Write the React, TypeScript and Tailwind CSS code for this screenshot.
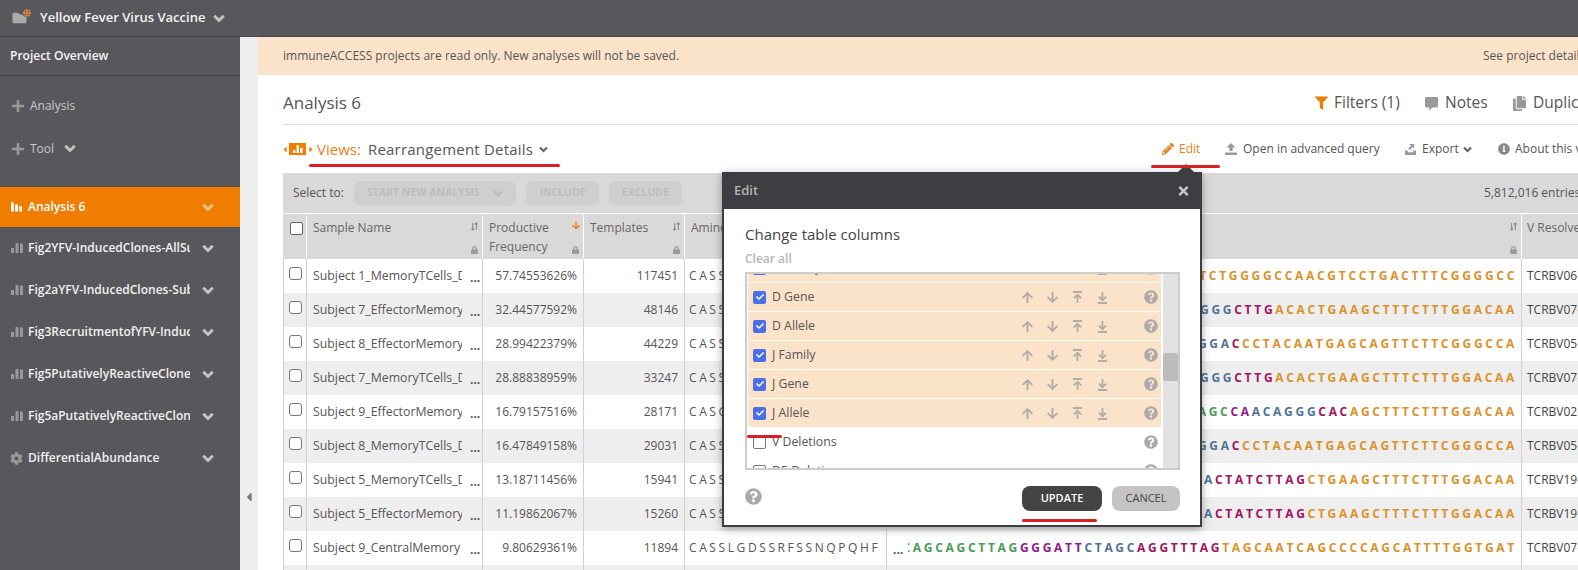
import React from "react";
import {
  FaPlus, FaFilter, FaCommentAlt, FaCopy, FaPencilAlt, FaInfoCircle,
  FaQuestionCircle, FaTimes, FaCog, FaArrowUp, FaArrowDown, FaLock, FaCheck, FaFolder, FaGlobe,
  FaCaretLeft, FaCaretRight,
} from "react-icons/fa";

const Chev = ({ className = "" }: { className?: string }) => (
  <svg viewBox="0 0 12 9" className={className} fill="none" stroke="currentColor" strokeWidth="3">
    <path d="M1.3 1.8 6 6.5l4.7-4.7" />
  </svg>
);
const Bars = ({ className = "" }: { className?: string }) => (
  <svg viewBox="0 0 12 10" className={className} fill="currentColor">
    <rect x="0" y="0" width="3" height="10" />
    <rect x="4.5" y="2" width="3" height="8" />
    <rect x="9" y="4" width="3" height="6" />
  </svg>
);
const GreyBars = () => (
  <svg viewBox="0 0 12 10" className="w-[12px] h-[10px] text-[#999]" fill="currentColor">
    <rect x="0" y="5" width="3" height="5" />
    <rect x="4.5" y="0" width="3" height="10" />
    <rect x="9" y="0.5" width="3" height="9.5" />
  </svg>
);
const SortIcon = ({ active = false }: { active?: boolean }) =>
  active ? (
    <FaArrowDown className="w-[8px] h-[9px] text-[#ee7d11] mt-[3px]" />
  ) : (
    <svg viewBox="0 0 10 10" className="w-[9px] h-[9px] text-[#888] mt-[3px]" stroke="currentColor" strokeWidth="1.2" fill="none">
      <path d="M3 1v8M1.5 7.5 3 9l1.5-1.5M7 9V1M5.5 2.5 7 1l1.5 1.5" />
    </svg>
  );
const ToTop = () => (
  <svg viewBox="0 0 12 14" className="w-[11px] h-[13px] text-[#b0aca6]" fill="none" stroke="currentColor" strokeWidth="2">
    <path d="M1 1h10M6 13V4M2 8l4-4 4 4" />
  </svg>
);
const ToBottom = () => (
  <svg viewBox="0 0 12 14" className="w-[11px] h-[13px] text-[#b0aca6]" fill="none" stroke="currentColor" strokeWidth="2">
    <path d="M1 13h10M6 1v9M2 6l4 4 4-4" />
  </svg>
);
const UploadBar = () => (
  <svg viewBox="0 0 12 12" className="w-[12px] h-[12px] text-[#999]" fill="currentColor">
    <path d="M6 0 10.5 4.5H7.6V8H4.4V4.5H1.5Z" />
    <rect x="0" y="9.5" width="12" height="2.5" />
  </svg>
);
const ExportIcon = () => (
  <svg viewBox="0 0 14 13" className="w-[13px] h-[12px] text-[#999]" fill="currentColor">
    <path d="M5 1h6v5L9.2 4.3 6 7.5 4.5 6l3.2-3.2Z" />
    <path d="M1 8h3v2h6V8h3v5H1Z" />
  </svg>
);

const C = {
  g: "text-[#4c9a5c]",
  p: "text-[#8e1a8e]",
  b: "text-[#4f7397]",
  r: "text-[#a3125f]",
  a: "text-[#d9922c]",
};
type Seg = [string, keyof typeof C];

const seqA: Seg[] = [["GCAGTAGCAGCTAC", "g"], ["GGGC", "b"], ["GGG", "b"], ["CTTG", "r"], ["ACACTGAAGCTTTCTTTGGACAA", "a"]];
const seqB: Seg[] = [["AGCAGCGTAGCTAG", "g"], ["CAGGGA", "b"], ["GGA", "b"], ["C", "r"], ["CCTACAATGAGCAGTTCTTCGGGCCA", "a"]];
const seqC: Seg[] = [["GCAGTATTGGAAC", "g"], ["TGGCA", "b"], ["CTATCTTAG", "r"], ["CTGAAGCTTTCTTTGGACAA", "a"]];

const rows: { n: string; f: string; t: string; aa: string; seq: Seg[]; v: string }[] = [
  { n: "Subject 1_MemoryTCells_Day0", f: "57.74553626%", t: "117451", aa: "CASSLGANVLTFGA", seq: [["AGCTACTGAGTAGCAGC", "g"], ["TCTGGGGCCAACGTCCTGACTTTCGGGGCC", "a"]], v: "TCRBV06-01" },
  { n: "Subject 7_EffectorMemoryTCells", f: "32.44577592%", t: "48146", aa: "CASSLGLTLKLSLDK", seq: seqA, v: "TCRBV07-09" },
  { n: "Subject 8_EffectorMemoryTCells", f: "28.99422379%", t: "44229", aa: "CASSLGTYNEQFFGP", seq: seqB, v: "TCRBV05-01" },
  { n: "Subject 7_MemoryTCells_Day0", f: "28.88838959%", t: "33247", aa: "CASSLGLTLKLSLDK", seq: seqA, v: "TCRBV07-09" },
  { n: "Subject 9_EffectorMemoryTCells", f: "16.79157516%", t: "28171", aa: "CASGQQGTALSFGQ", seq: [["GCAGTACCTTGCACCAGC", "g"], ["AGC", "g"], ["CA", "p"], ["ACAGGG", "b"], ["CAC", "r"], ["AGCTTTCTTTGGACAA", "a"]], v: "TCRBV02-01" },
  { n: "Subject 8_MemoryTCells_Day0", f: "16.47849158%", t: "29031", aa: "CASSLGTYNEQFFGP", seq: seqB, v: "TCRBV05-01" },
  { n: "Subject 5_MemoryTCells_Day0", f: "13.18711456%", t: "15941", aa: "CASSLGYLAEAFFGQ", seq: seqC, v: "TCRBV19-01" },
  { n: "Subject 5_EffectorMemoryTCells", f: "11.19862067%", t: "15260", aa: "CASSLGYLAEAFFGQ", seq: seqC, v: "TCRBV19-01" },
  { n: "Subject 9_CentralMemory", f: "9.80629361%", t: "11894", aa: "CASSLGDSSRFSSNQPQHF", seq: [["GCTGGCCAGCTGCTCTGTGTACTTCTGTGCCAGC", "g"], ["AGCAGCTTAG", "g"], ["GGGATT", "p"], ["CTAGC", "b"], ["AGGTTTAG", "r"], ["TAGCAATCAGCCCCAGCATTTTGGTGAT", "a"]], v: "TCRBV07-02" },
];

const grid = "grid grid-cols-[24px_176px_101px_101px_202px_635px_200px]";
const sep = "border-r border-[#d2d2d2]";

const NavItem = ({ label, gear = false }: { label: string; gear?: boolean }) => (
  <div className="h-[42px] flex items-center pl-[11px] pr-[26px]">
    <div className="w-[17px] flex items-center">
      {gear ? <FaCog className="w-[13px] h-[13px] text-[#999] -ml-px" /> : <GreyBars />}
    </div>
    <span className="w-[162px] overflow-hidden whitespace-nowrap text-[12px] font-semibold text-[#f1f1f1]">{label}</span>
    <Chev className="ml-auto w-[12px] h-[9px] text-[#c4c4c4]" />
  </div>
);

const ColRow = ({ label, checked = true, arrows = true }: { label: string; checked?: boolean; arrows?: boolean }) => (
  <div className={`h-[28px] mb-px flex items-center pl-[5px] ${checked ? "bg-[#fbe3ca]" : "bg-white"}`}>
    {checked ? (
      <span className="w-[13px] h-[13px] rounded-[2px] bg-[#4a6ee8] flex items-center justify-center">
        <FaCheck className="w-[8px] h-[8px] text-white" />
      </span>
    ) : (
      <span className="w-[13px] h-[13px] rounded-[2px] border border-[#777] bg-white" />
    )}
    <span className="ml-[6px] w-[250px] text-[12.3px] text-[#555]">{label}</span>
    <div className={`flex items-center gap-[14px] w-[94px] ${arrows ? "" : "invisible"}`}>
      <FaArrowUp className="w-[11px] h-[13px] text-[#b0aca6]" />
      <FaArrowDown className="w-[11px] h-[13px] text-[#b0aca6]" />
      <ToTop />
      <ToBottom />
    </div>
    <FaQuestionCircle className="ml-[28px] w-[14px] h-[14px] text-[#aaa]" />
  </div>
);

export default function App() {
  return (
    <div className="relative w-[1578px] h-[570px] overflow-hidden bg-white font-['Open_Sans',sans-serif] text-[#555]">
      {/* top bar */}
      <div className="h-[37px] bg-[#58585c] border-b border-[#444448] flex items-center pl-[11px]">
        <div className="relative w-[18px] h-[14px] mr-[11px]">
          <FaFolder className="w-[17px] h-[14px] text-[#aaa]" />
          <span className="absolute -top-[3px] right-[-2px] w-[9px] h-[9px] rounded-full bg-[#58585c] flex items-center justify-center">
            <FaGlobe className="w-[8px] h-[8px] text-[#e08a3c]" />
          </span>
        </div>
        <span className="text-[13px] font-semibold text-[#f4f4f4]">Yellow Fever Virus Vaccine</span>
        <Chev className="ml-[8px] w-[12px] h-[9px] text-[#c4c4c4]" />
      </div>

      <div className="flex h-[533px]">
        {/* sidebar */}
        <aside className="w-[240px] shrink-0 bg-[#58585c]">
          <div className="h-[39px] border-b border-[#444448] flex items-center pl-[10px] text-[12px] font-semibold text-[#f4f4f4]">
            Project Overview
          </div>
          <div className="h-[43px] mt-[8px] flex items-center pl-[11px] text-[12px] text-[#c9c9c9]">
            <FaPlus className="w-[14px] h-[14px] text-[#999] mr-[5px]" />
            Analysis
          </div>
          <div className="h-[43px] flex items-center pl-[11px] text-[12px] text-[#c9c9c9]">
            <FaPlus className="w-[14px] h-[14px] text-[#999] mr-[5px]" />
            Tool
            <Chev className="ml-[10px] w-[12px] h-[9px] text-[#c4c4c4]" />
          </div>
          <div className="h-[40px] mt-[17px] bg-[#f07c00] flex items-center pl-[11px] pr-[26px]">
            <div className="w-[17px] flex items-center">
              <Bars className="w-[11px] h-[10px] text-white" />
            </div>
            <span className="text-[12px] font-semibold text-white">Analysis 6</span>
            <Chev className="ml-auto w-[12px] h-[9px] text-[#f6c48a]" />
          </div>
          <NavItem label="Fig2YFV-InducedClones-AllSubjects" />
          <NavItem label="Fig2aYFV-InducedClones-Subjects" />
          <NavItem label="Fig3RecruitmentofYFV-InducedClones" />
          <NavItem label="Fig5PutativelyReactiveClones" />
          <NavItem label="Fig5aPutativelyReactiveClones" />
          <NavItem label="DifferentialAbundance" gear />
        </aside>

        {/* collapse strip */}
        <div className="w-[18px] shrink-0 bg-[#eeeeee] flex items-end pb-[66px] pl-[6px]">
          <FaCaretLeft className="w-[6px] h-[14px] text-[#777]" />
        </div>

        {/* main */}
        <main className="flex-1 min-w-0 overflow-hidden">
          <div className="h-[38px] bg-[#fbe3ca] flex items-center pl-[25px] text-[12px] text-[#555] whitespace-nowrap">
            <span className="w-[1200px] shrink-0">immuneACCESS projects are read only. New analyses will not be saved.</span>
            <span>See project details</span>
          </div>
          <div className="pl-[25px]">
            <div className="h-[50px] pt-[7px] border-b border-[#dcdcdc] flex items-center whitespace-nowrap w-[1400px]">
              <span className="w-[1032px] text-[17px] text-[#555]">Analysis 6</span>
              <FaFilter className="w-[13px] h-[14px] text-[#f07c00] mr-[6px]" />
              <span className="text-[15.5px] w-[90px]">Filters (1)</span>
              <FaCommentAlt className="w-[15px] h-[13px] text-[#999] mr-[6px]" />
              <span className="text-[15.5px] w-[67px]">Notes</span>
              <FaCopy className="w-[15px] h-[15px] text-[#999] mr-[6px]" />
              <span className="text-[15.5px]">Duplicate</span>
            </div>
            <div className="h-[48px] flex items-center whitespace-nowrap w-[1400px]">
              <FaCaretLeft className="w-[4px] h-[9px] text-[#f07c00] mr-[2px]" />
              <span className="w-[17px] h-[12px] bg-[#f07c00] flex items-center justify-center">
                <svg viewBox="0 0 10 8" className="w-[10px] h-[8px] text-white" fill="currentColor">
                  <rect x="0" y="5" width="2.4" height="3" />
                  <rect x="3.6" y="0" width="2.4" height="8" />
                  <rect x="7.2" y="3" width="2.4" height="5" />
                </svg>
              </span>
              <FaCaretRight className="w-[4px] h-[9px] text-[#f07c00] ml-[3px] mr-[4px]" />
              <span className="text-[15px] text-[#e8801c] w-[51px]">Views:</span>
              <span className="text-[15px] text-[#555] tracking-[0.2px] w-[171px]">Rearrangement Details</span>
              <Chev className="w-[9px] h-[7px] text-[#666] mr-[614px]" />
              <FaPencilAlt className="w-[12px] h-[12px] text-[#e8801c] mr-[5px]" />
              <span className="text-[12px] text-[#e8801c] w-[46px]">Edit</span>
              <span className="mr-[6px]"><UploadBar /></span>
              <span className="text-[12px] w-[161px]">Open in advanced query</span>
              <span className="mr-[5px]"><ExportIcon /></span>
              <span className="text-[12px] w-[41px]">Export</span>
              <Chev className="w-[9px] h-[7px] text-[#666] mr-[26px]" />
              <FaInfoCircle className="w-[12px] h-[12px] text-[#888] mr-[5px]" />
              <span className="text-[12px]">About this view</span>
            </div>

            {/* table toolbar */}
            <div className="h-[41px] w-[1400px] bg-[#d9d9d9] border-b border-white flex items-center pl-[10px] whitespace-nowrap">
              <span className="text-[12px] w-[61px]">Select to:</span>
              <span className="w-[162px] h-[25px] rounded-[7px] bg-[#cfcfcf] flex items-center pl-[13px] text-[10.5px] font-bold text-[#bcbcbc]">
                START NEW ANALYSIS
                <Chev className="ml-[13px] w-[10px] h-[7px] text-[#bcbcbc]" />
              </span>
              <span className="ml-[10px] w-[73px] h-[25px] rounded-[7px] bg-[#cfcfcf] flex items-center justify-center text-[10.5px] font-bold text-[#bcbcbc]">INCLUDE</span>
              <span className="ml-[10px] w-[73px] h-[25px] rounded-[7px] bg-[#cfcfcf] flex items-center justify-center text-[10.5px] font-bold text-[#bcbcbc]">EXCLUDE</span>
              <span className="ml-[802px] text-[12px]">5,812,016 entries</span>
            </div>

            {/* header */}
            <div className={`${grid} h-[45px] bg-[#d9d9d9] text-[12px] text-[#666]`}>
              <div className="border-r border-white pl-[7px] pt-[8px]">
                <span className="block w-[13px] h-[13px] rounded-[2px] border border-[#666] bg-white" />
              </div>
              <div className="border-r border-white pl-[6px] pr-[3px] pt-[5px] relative flex justify-between">
                <span>Sample Name</span>
                <SortIcon />
                <FaLock className="absolute right-[4px] bottom-[5px] w-[7px] h-[8px] text-[#999]" />
              </div>
              <div className="border-r border-white pl-[6px] pr-[3px] pt-[4px] relative flex justify-between">
                <span className="leading-[19px]">Productive<br />Frequency</span>
                <SortIcon active />
                <FaLock className="absolute right-[4px] bottom-[5px] w-[7px] h-[8px] text-[#999]" />
              </div>
              <div className="border-r border-white pl-[6px] pr-[3px] pt-[5px] relative flex justify-between">
                <span>Templates</span>
                <SortIcon />
                <FaLock className="absolute right-[4px] bottom-[5px] w-[7px] h-[8px] text-[#999]" />
              </div>
              <div className="border-r border-white pl-[6px] pt-[5px]">Amino Acid</div>
              <div className="border-r border-white pr-[3px] pt-[5px] relative flex justify-end">
                <SortIcon />
                <FaLock className="absolute right-[4px] bottom-[5px] w-[7px] h-[8px] text-[#999]" />
              </div>
              <div className="pl-[5px] pt-[5px] whitespace-nowrap">V Resolved</div>
            </div>

            {/* rows */}
            {rows.map((r, i) => (
              <div key={i} className={`${grid} h-[34px] items-stretch text-[12px] text-[#555] whitespace-nowrap ${i % 2 ? "bg-[#eeeeee]" : "bg-white"}`}>
                <div className={`${sep} border-l pl-[5px] pt-[8px]`}>
                  <span className="block w-[13px] h-[13px] rounded-[3px] border border-[#777] bg-white" />
                </div>
                <div className={`${sep} pl-[6px] flex items-center`}>
                  <span className="w-[149px] overflow-hidden text-[12.3px]">{r.n}</span>
                  <span className="ml-[8px] font-bold text-[12px] leading-none pt-[4px]">...</span>
                </div>
                <div className={`${sep} pr-[6px] flex items-center justify-end`}>{r.f}</div>
                <div className={`${sep} pr-[6px] flex items-center justify-end`}>{r.t}</div>
                <div className={`${sep} pl-[4px] flex items-center tracking-[2.6px] overflow-hidden`}>{r.aa}</div>
                <div className={`${sep} flex items-center pl-[6px] overflow-hidden`}>
                  <span className="font-bold leading-none pt-[4px] shrink-0 mr-[5px]">...</span>
                  <div className="flex-1 min-w-0 flex justify-end overflow-hidden pr-[4px] font-bold tracking-[2.7px]">
                    <span className="shrink-0">
                      {r.seq.map((s, j) => (
                        <span key={j} className={C[s[1]]}>{s[0]}</span>
                      ))}
                    </span>
                  </div>
                </div>
                <div className="pl-[5px] flex items-center text-[#444]">{r.v}</div>
              </div>
            ))}
            <div className={`${grid} h-[34px] bg-[#eeeeee]`}>
              <div className={`${sep} border-l`} />
              <div className={sep} />
              <div className={sep} />
              <div className={sep} />
              <div className={sep} />
              <div className={sep} />
              <div />
            </div>
          </div>
        </main>
      </div>

      {/* modal */}
      <div className="absolute left-[722px] top-[172px] w-[480px] h-[355px] border-2 border-t-0 border-[#3d3e42] bg-white shadow-[0_2px_8px_rgba(0,0,0,0.35)]">
        <div className="absolute -top-[8px] left-[454px] w-0 h-0 border-l-[8px] border-r-[8px] border-b-[8px] border-l-transparent border-r-transparent border-b-[#3d3e42]" />
        <div className="h-[37px] -mx-[2px] bg-[#3d3e42] flex items-center justify-between pl-[12px] pr-[12px]">
          <span className="text-[13px] font-semibold text-[#b5b5b5]">Edit</span>
          <FaTimes className="w-[13px] h-[14px] text-[#c4c4c4]" />
        </div>
        <div className="pl-[21px] pr-[20px]">
          <div className="mt-[14px] text-[15px] text-[#444] leading-[22px]">Change table columns</div>
          <div className="mt-[5px] text-[12px] font-semibold text-[#b5b5b5] leading-[18px]">Clear all</div>
          <div className="mt-[4px] h-[198px] border-2 border-[#cccccc] flex overflow-hidden">
            <div className="w-[414px] pl-px overflow-hidden">
              <div className="-mt-[20px]">
                <ColRow label="D Family" />
                <ColRow label="D Gene" />
                <ColRow label="D Allele" />
                <ColRow label="J Family" />
                <ColRow label="J Gene" />
                <ColRow label="J Allele" />
                <ColRow label="V Deletions" checked={false} arrows={false} />
                <ColRow label="D5 Deletions" checked={false} arrows={false} />
              </div>
            </div>
            <div className="ml-[2px] w-[15px] bg-[#e2e2e2] pt-[79px]">
              <div className="h-[28px] rounded-[2px] bg-[#bcbcbc]" />
            </div>
          </div>
          <div className="mt-[16px] flex items-center">
            <FaQuestionCircle className="w-[17px] h-[17px] text-[#aaa] -mt-[5px]" />
            <span className="ml-auto w-[80px] h-[25px] rounded-[8px] bg-[#444444] flex items-center justify-center text-[11px] font-semibold text-white">UPDATE</span>
            <span className="ml-[10px] w-[68px] h-[25px] rounded-[8px] bg-[#c4c4c4] flex items-center justify-center text-[11px] text-[#444]">CANCEL</span>
          </div>
        </div>
      </div>

      {/* red annotations */}
      <div className="absolute left-[309px] top-[164px] w-[251px] h-[3px] rounded-full bg-[#dc1f26]" />
      <div className="absolute left-[1151px] top-[165px] w-[69px] h-[3px] rounded-full bg-[#dc1f26]" />
      <div className="absolute left-[747px] top-[435px] w-[35px] h-[3px] rounded-full bg-[#dc1f26]" />
      <div className="absolute left-[1022px] top-[519px] w-[75px] h-[3px] rounded-full bg-[#dc1f26]" />
    </div>
  );
}
